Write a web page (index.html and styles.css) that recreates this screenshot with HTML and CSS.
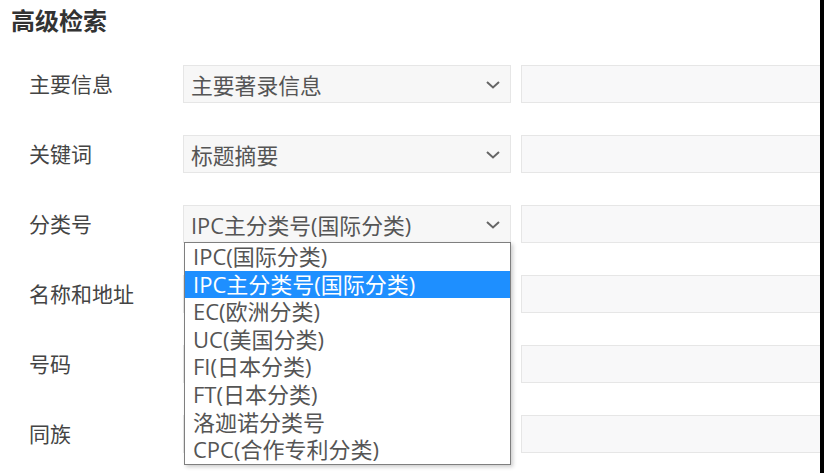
FILE: index.html
```html
<!DOCTYPE html>
<html lang="zh-CN">
<head>
    <meta charset="UTF-8">
    <meta name="viewport" content="width=device-width, initial-scale=1.0">
    <title>高级检索</title>
    <link rel="stylesheet" href="styles.css">
</head>
<body>
    <div class="page">
        <h2 class="title">高级检索</h2>
        <div class="form">
            <div class="row">
                <label class="label">主要信息</label>
                <div class="select">
                    <span>主要著录信息</span>
                    <svg class="chevron" width="14" height="8" viewBox="0 0 14 8"><path d="M1 1l6 5.5L13 1" fill="none" stroke="#666" stroke-width="2"/></svg>
                </div>
                <div class="input"></div>
            </div>
            <div class="row">
                <label class="label">关键词</label>
                <div class="select">
                    <span>标题摘要</span>
                    <svg class="chevron" width="14" height="8" viewBox="0 0 14 8"><path d="M1 1l6 5.5L13 1" fill="none" stroke="#666" stroke-width="2"/></svg>
                </div>
                <div class="input"></div>
            </div>
            <div class="row">
                <label class="label">分类号</label>
                <div class="select">
                    <span>IPC主分类号(国际分类)</span>
                    <svg class="chevron" width="14" height="8" viewBox="0 0 14 8"><path d="M1 1l6 5.5L13 1" fill="none" stroke="#666" stroke-width="2"/></svg>
                    <ul class="dropdown">
                        <li>IPC(国际分类)</li>
                        <li class="active">IPC主分类号(国际分类)</li>
                        <li>EC(欧洲分类)</li>
                        <li>UC(美国分类)</li>
                        <li>FI(日本分类)</li>
                        <li>FT(日本分类)</li>
                        <li>洛迦诺分类号</li>
                        <li>CPC(合作专利分类)</li>
                    </ul>
                </div>
                <div class="input"></div>
            </div>
            <div class="row">
                <label class="label">名称和地址</label>
                <div class="select"></div>
                <div class="input"></div>
            </div>
            <div class="row">
                <label class="label">号码</label>
                <div class="select"></div>
                <div class="input"></div>
            </div>
            <div class="row">
                <label class="label">同族</label>
                <div class="select"></div>
                <div class="input"></div>
            </div>
        </div>
    </div>
    <div class="edge"></div>
</body>
</html>
```

FILE: styles.css
```css
body, html {
    margin: 0;
    padding: 0;
    height: 100%;
    overflow: hidden;
    background-color: #fff;
    font-family: "Open Sans", "Noto Sans CJK SC", sans-serif;
}
body {
    display: flex;
}
.page {
    flex: 1;
    overflow: hidden;
}
.edge {
    width: 4px;
    background-color: #000;
}
.title {
    margin: 0;
    padding-left: 11px;
    font-size: 24px;
    line-height: 42px;
    font-weight: bold;
    color: #333;
}
.form {
    display: flex;
    flex-direction: column;
    gap: 32px;
    padding-top: 23px;
}
.row {
    display: grid;
    grid-template-columns: 173px 328px 1fr;
    column-gap: 10px;
    height: 38px;
    margin-right: -10px;
}
.label {
    padding-left: 29px;
    font-size: 21px;
    line-height: 38px;
    color: #444;
}
.select {
    position: relative;
    display: flex;
    align-items: center;
    justify-content: space-between;
    padding: 0 10px 0 7px;
    border: 1px solid #e6e6e6;
    background-color: #f7f7f7;
    font-size: 21.8px;
    color: #555;
}
.chevron {
    margin-top: 2px;
}
.input {
    border: 1px solid #e6e6e6;
    background-color: #f8f8f9;
}
.dropdown {
    position: absolute;
    top: 36px;
    left: 0;
    width: 325px;
    margin: 0;
    padding: 0;
    list-style: none;
    border: 1px solid #7f7f7f;
    background-color: #fff;
    box-shadow: 2px 2px 4px rgba(0, 0, 0, 0.2);
    z-index: 10;
}
.dropdown li {
    padding-left: 8px;
    font-size: 22px;
    line-height: 27.6px;
    color: #555;
}
.dropdown li.active {
    background-color: #1e8fff;
    color: #fff;
}
```
